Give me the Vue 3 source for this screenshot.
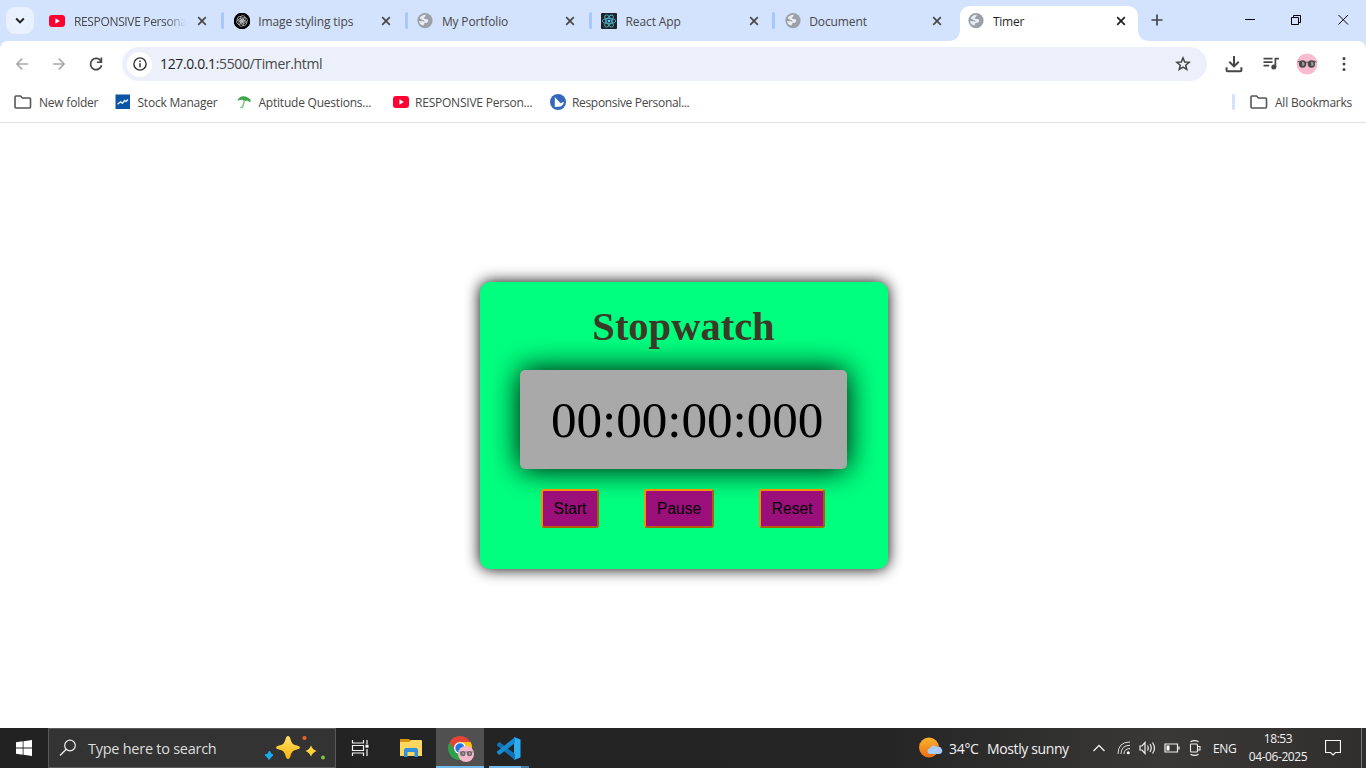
<script setup>
const tabs = [
  { title: 'RESPONSIVE Persona', icon: 'youtube', cls: 't-yt' },
  { title: 'Image styling tips', icon: 'gpt', cls: 't-img' },
  { title: 'My Portfolio', icon: 'globe', cls: 't-port' },
  { title: 'React App', icon: 'react', cls: 't-react' },
  { title: 'Document', icon: 'globe', cls: 't-doc' },
  { title: 'Timer', icon: 'globe', cls: 't-timer', active: true },
]
</script>

<template>
  <div class="screen">
    <div class="tabstrip">
      <div class="tabsearch">
        <svg width="10" height="10" viewBox="0 0 10 10"><path d="M1.2 2.500 5 6.300 8.800 2.500" fill="none" stroke="#1f1f1f" stroke-width="1.9" /></svg>
      </div>
      <div v-for="t in tabs" :key="t.title" class="tab" :class="[{ active: t.active }, t.cls]">
        <svg v-if="t.active" class="shape" width="202" height="35" viewBox="0 0 202 35">
          <path d="M0 35C8 35 12 31 12 23V11C12 4 16 0 23 0H179C186 0 190 4 190 11V23C190 31 194 35 202 35Z" fill="#fff" />
        </svg>
        <svg class="fav" width="16" height="16" viewBox="0 0 16 16">
          <g v-if="t.icon === 'youtube'">
            <rect y="2" width="16" height="12" rx="3" fill="#ff0033" /><path d="M6.400 5.300 10.800 8 6.400 10.700Z" fill="#fff" />
          </g>
          <g v-else-if="t.icon === 'gpt'">
            <circle cx="8" cy="8" r="8.300" fill="#000" />
            <g fill="none" stroke="#c4c4c4" stroke-width=".75">
              <rect v-for="a in [0, 60, 120, 180, 240, 300]" :key="a" x="6.200" y="2.700" width="5" height="6.200" rx="2.200" :transform="`rotate(${a} 8 8)`" />
            </g>
          </g>
          <g v-else-if="t.icon === 'react'">
            <rect width="16" height="16" rx="1" fill="#20232a" />
            <g fill="none" stroke="#4fb3c8" stroke-width=".9">
              <ellipse v-for="a in [0, 60, 120]" :key="a" cx="8" cy="8" rx="6.800" ry="2.600" :transform="`rotate(${a} 8 8)`" />
            </g>
            <circle cx="8" cy="8" r="1.300" fill="#61dafb" />
          </g>
          <g v-else>
            <circle cx="8" cy="7.600" r="7.600" fill="#9aa0a6" />
            <path d="M9.500 1.800C8 2.500 8.600 3.800 7.300 4.200S6.400 5.500 7.600 5.800 10.800 5.900 11.200 7.400 9.800 9.600 8.300 9.800 7.400 11.200 6.300 12.600C4 12 2.300 10.200 2 8.200H5.400C6.500 8.400 7.600 8.800 7.600 7.900S5.500 7.300 4.800 6.700 3.700 5.600 2.700 5.400C3.800 2.800 6.500 1.500 9.500 1.800Z" fill="#e9eef6" />
          </g>
        </svg>
        <span class="title">{{ t.title }}</span>
        <svg class="close" width="10" height="10" viewBox="0 0 10 10"><path d="M1.200 1.200 8.800 8.800M8.800 1.200 1.200 8.800" stroke="currentColor" stroke-width="1.700" /></svg>
        <i v-if="!t.active && t.title !== 'Document'" class="sep"></i>
      </div>
      <svg class="plus" width="12" height="12" viewBox="0 0 12 12"><path d="M6 .500V11.500M.500 6H11.500" stroke="#444746" stroke-width="1.700" /></svg>
      <div class="winctl">
        <svg width="11" height="12" viewBox="0 0 11 12"><path d="M1 5.500H11" stroke="#000" /></svg>
        <svg width="11" height="12" viewBox="0 0 11 12"><path d="M.500 3.500H7.500V10.500H.500ZM2.500 3.500V1.500H9.500V8.500H7.500" fill="none" stroke="#000" /></svg>
        <svg width="11" height="12" viewBox="0 0 11 12"><path d="M.500 1 10 10.500M10 1 .500 10.500" stroke="#000" /></svg>
      </div>
    </div>

    <div class="toolbar">
      <div class="nav">
        <svg width="16" height="16" viewBox="0 0 16 16"><path d="M14 8H2.800M8.200 2.600 2.800 8 8.200 13.400" fill="none" stroke="#a8aaa9" stroke-width="1.600" /></svg>
        <svg width="16" height="16" viewBox="0 0 16 16"><path d="M2 8H13.200M7.800 2.600 13.200 8 7.800 13.400" fill="none" stroke="#a8aaa9" stroke-width="1.600" /></svg>
        <svg width="16" height="16" viewBox="0 0 16 16"><path d="M13 5.200A5.600 5.600 0 1 0 13.600 9.300" fill="none" stroke="#444746" stroke-width="1.700" /><path d="M14.200 1.600V6.900H8.900V5.400H12.500V1.600Z" fill="#444746" /></svg>
      </div>
      <div class="omnibox">
        <div class="info"><svg width="14" height="14" viewBox="0 0 14 14"><circle cx="7" cy="7" r="6.100" fill="none" stroke="#333" stroke-width="1.400" /><path d="M7 6.200V10.300M7 3.500V5" stroke="#333" stroke-width="1.500" /></svg></div>
        <span class="url"><b>127.0.0.1</b>:5500/Timer.html</span>
        <svg class="star" width="16" height="16" viewBox="0 0 16 16"><path d="M8 1.900 9.700 6 14.100 6.350 10.750 9.200 11.800 13.500 8 11.200 4.200 13.500 5.250 9.200 1.900 6.350 6.300 6Z" fill="none" stroke="#444746" stroke-width="1.500" /></svg>
      </div>
      <div class="actions">
        <svg width="18" height="18" viewBox="0 0 18 18"><path d="M9 1V11M4.300 6.700 9 11.400 13.700 6.700M1.600 12.200V15.200Q1.600 16.200 2.600 16.200H15.400Q16.400 16.200 16.400 15.200V12.200" fill="none" stroke="#444746" stroke-width="2" /></svg>
        <svg class="music" width="18" height="18" viewBox="0 0 18 18"><path d="M1.500 3.600H10.500M1.500 7.100H10.500M1.500 10.600H7.200M13.400 12.500V3.600H17" fill="none" stroke="#444746" stroke-width="1.700" /><circle cx="11.800" cy="12" r="2.500" fill="#444746" /></svg>
        <svg class="avatar" width="22" height="22" viewBox="0 0 22 22"><circle cx="11" cy="11" r="10.500" fill="#f8bbd0" /><circle cx="6.600" cy="11" r="3.700" fill="#4a4a4a" /><circle cx="15.400" cy="11" r="3.700" fill="#4a4a4a" /><path d="M6 8.800A3 3 0 0 1 8.500 12L6.500 13.200ZM15 8.800A3 3 0 0 1 17.500 12L15.500 13.200Z" fill="#a2a5a4" /><path d="M1.500 9 4 8M18 8 20.500 9M9.500 9.500Q11 8.500 12.500 9.500" fill="none" stroke="#4a4044" stroke-width=".9" /></svg>
        <svg class="dots" width="4" height="16" viewBox="0 0 4 16"><circle v-for="y in [2.500, 8, 13.500]" :key="y" cx="2" :cy="y" r="1.500" fill="#444746" /></svg>
      </div>
    </div>

    <div class="bookmarks">
      <svg class="folder" width="18" height="14" viewBox="0 0 18 14"><path d="M1 2Q1 1 2 1H6.500L8.500 3H15.500Q16.500 3 16.500 4V12Q16.500 13 15.500 13H2Q1 13 1 12Z" fill="none" stroke="#555" stroke-width="1.600" /></svg>
      <span class="b1">New folder</span>
      <svg width="16" height="16" viewBox="0 0 16 16"><rect x=".500" y=".500" width="14.500" height="14.500" fill="#0b55a4" /><path d="M2.500 10.200 5.500 7.900 7.500 9.200 9.500 6.500 11 7.500 13 5.500" fill="none" stroke="#dceaff" stroke-width="1.400" /></svg>
      <span class="b2">Stock Manager</span>
      <svg width="16" height="16" viewBox="0 0 16 16"><path d="M1.500 7C2.500 2 9.500-.2 14.800 6L14 8.200 11.300 6.500 8.800 7.300 6.300 5.800 3.500 6Z" fill="#3ca64a" /><path d="M8.600 6 7 11.800Q6.500 14.400 4.400 13" fill="none" stroke="#84c98c" stroke-width="1.600" /></svg>
      <span class="b3">Aptitude Questions...</span>
      <svg width="16" height="16" viewBox="0 0 16 16"><rect y="2" width="16" height="12" rx="3" fill="#ff0033" /><path d="M6.400 5.300 10.800 8 6.400 10.700Z" fill="#fff" /></svg>
      <span class="b4">RESPONSIVE Person...</span>
      <svg width="16" height="16" viewBox="0 0 16 16"><circle cx="8" cy="8" r="8" fill="#3567bd" /><path d="M4.800 3 10.500 9.300 14 7.700Q13 13 8 12.800L4.800 13Z" fill="#fff" /></svg>
      <span class="b5">Responsive Personal...</span>
      <i class="bsep"></i>
      <svg class="folder" width="18" height="14" viewBox="0 0 18 14"><path d="M1 2Q1 1 2 1H6.500L8.500 3H15.500Q16.500 3 16.500 4V12Q16.500 13 15.500 13H2Q1 13 1 12Z" fill="none" stroke="#555" stroke-width="1.600" /></svg>
      <span class="b6">All Bookmarks</span>
    </div>

    <main class="page">
      <section class="watch">
        <h1>Stopwatch</h1>
        <div class="display">00:00:00:000</div>
        <div class="buttons"><button>Start</button><button>Pause</button><button>Reset</button></div>
      </section>
    </main>

    <footer class="taskbar">
      <div class="start"><svg width="16" height="16" viewBox="0 0 16 16"><path d="M0 2.300 6.700 1.300V7.600H0ZM7.500 1.200 16 0V7.600H7.500ZM0 8.400H6.700V14.700L0 13.700ZM7.500 8.400H16V16L7.500 14.800Z" fill="#fff" /></svg></div>
      <div class="search">
        <svg width="18" height="18" viewBox="0 0 18 18"><circle cx="11" cy="6.500" r="5.300" fill="none" stroke="#eee" stroke-width="1.200" /><path d="M7.200 10.300 1 16.500" stroke="#eee" stroke-width="1.300" /></svg>
        <span>Type here to search</span>
        <svg class="sparkle" width="64" height="28" viewBox="0 0 64 28">
          <defs><linearGradient id="gold" x1="0" y1="0" x2="0" y2="1"><stop stop-color="#ffe066" /><stop offset="1" stop-color="#f9b50c" /></linearGradient></defs>
          <path d="M24 1Q26 1 27 6Q28 9 31 10Q36 11 36 12.500T31 15Q28 16 27 19Q26 24 24 24T21 19Q20 16 17 15Q12 14 12 12.500T17 10Q20 9 21 6Q22 1 24 1Z" fill="url(#gold)" />
          <path d="M47 10.500Q48.500 14.500 52.500 16 48.500 17.500 47 21.500 45.500 17.500 41.500 16 45.500 14.500 47 10.500Z" fill="#ffd23c" />
          <path d="M5.500 16 7 19 9 20 7 22 5 24.500 3.500 22 1 20 4 19Z" fill="#18aef0" stroke="#18aef0" stroke-linejoin="round" />
          <circle cx="40.500" cy="3" r="2.100" fill="#ef6526" /><circle cx="59" cy="22.500" r="2" fill="#82c341" />
        </svg>
      </div>
      <div class="tile"><svg width="18" height="18" viewBox="0 0 18 18"><path d="M1.500 1V4H12.500V1M1.500 17V14H12.500V17M1.500 6.500H12.500V11.500H1.500ZM16 1V5M16 10V17" fill="none" stroke="#f2f2f2" stroke-width="1.200" /><rect x="14.500" y="5.700" width="3" height="3" fill="#fff" /></svg></div>
      <div class="tile explorer"><svg width="22" height="20" viewBox="0 0 22 20"><path d="M0 1H9L11 3V8H0Z" fill="#d9920a" /><path d="M0 4H9L11 2H21Q22 2 22 3V18H0Z" fill="#ffd660" /><path d="M4 19V12Q4 10 6 10H16Q18 10 18 12V19H14.500V14H7.500V19Z" fill="#3290dc" /></svg></div>
      <div class="tile chrome">
        <svg width="28" height="28" viewBox="0 0 28 28">
          <path d="M13 13 23.400 7A12 12 0 0 1 13 25Z" fill="#fbc116" /><path d="M13 13V25A12 12 0 0 1 2.600 7Z" fill="#2ba24c" /><path d="M2.600 7 8 16 13 13V7H23.400A12 12 0 0 0 2.600 7Z" fill="#e84435" /><path d="M13 7H23.400A12 12 0 0 1 25 13H17Z" fill="#fbc116" />
          <circle cx="13" cy="13" r="6" fill="#fff" /><circle cx="13" cy="13" r="4.700" fill="#2376e5" /><circle cx="19" cy="19" r="8" fill="#f6b8cc" /><path d="M12.500 17H26" stroke="#77636b" stroke-width=".8" /><circle cx="15.800" cy="18.600" r="2.600" fill="#666" /><circle cx="22.500" cy="18.600" r="2.600" fill="#666" /><path d="M15.500 16.800 17.500 18.600 15.500 20.400ZM22 16.800 24 18.600 22 20.400Z" fill="#aaa" />
        </svg>
      </div>
      <div class="tile code">
        <svg width="26" height="26" viewBox="0 0 26 26"><path d="M18 1 24.500 3.500V21.500L18 24Z" fill="#2baef0" /><path d="M1 8 3.500 6 19 18V24L1 9.500Z" fill="#1272b8" /><path d="M1 17 3.500 19 19 7V1L1 15.500Z" fill="#178bd1" /></svg>
      </div>
      <div class="tray">
        <svg class="weather" width="24" height="22" viewBox="0 0 24 22"><defs><linearGradient id="sun" x1="0" y1="0" x2="0" y2="1"><stop stop-color="#f9b42b" /><stop offset="1" stop-color="#ef6c16" /></linearGradient></defs><circle cx="10" cy="10.500" r="10" fill="url(#sun)" /><path d="M10.500 17A3 3 0 0 1 11 11.200 4 4 0 0 1 18 10.300 3.500 3.500 0 0 1 21 17Z" fill="#a9cbfb" /></svg>
        <span class="temp">34°C</span><span class="sunny">Mostly sunny</span>
        <svg class="up" width="12" height="8" viewBox="0 0 12 8"><path d="M.500 7 6 1.500 11.500 7" fill="none" stroke="#eee" stroke-width="1.300" /></svg>
        <svg class="wifi" width="14" height="14" viewBox="0 0 14 14"><path d="M1 13Q1 1 13 1M4 13Q4 4.300 13 4.300M7 13Q7 7.600 13 7.600" fill="none" stroke="#ddd" stroke-width="1" /><circle cx="11.300" cy="11.700" r="1.500" fill="#fff" /></svg>
        <svg class="vol" width="18" height="14" viewBox="0 0 18 14"><path d="M1 5H3L6 1.500V12.500L3 9H1ZM8.500 4.500Q10 7 8.500 9.500M11 3Q13.500 7 11 11M13.500 1.500Q17.500 7 13.500 12.500" fill="none" stroke="#eee" stroke-width="1.200" /></svg>
        <svg class="bat" width="16" height="10" viewBox="0 0 16 10"><path d="M1 1H13.500V9H1ZM15 3.500V6.500" fill="none" stroke="#eee" stroke-width="1.200" /><rect x="2.500" y="2.500" width="3" height="5" fill="#fff" /></svg>
        <svg class="cam" width="13" height="16" viewBox="0 0 13 16"><path d="M1.500 4H7.500Q8.500 4 8.500 5V11Q8.500 12 7.500 12H2.500Q1.500 12 1.500 11V4M8.500 6.500H11V10H8.500M1.500 1.800Q5.500-.500 9.500 1.800M1.500 14.200Q5.500 16.500 9.500 14.200" fill="none" stroke="#eee" stroke-width="1.100" /></svg>
        <span class="eng">ENG</span>
        <div class="clock"><span class="time">18:53</span><span class="date">04-06-2025</span></div>
        <svg class="note" width="16" height="16" viewBox="0 0 16 16"><path d="M.500.500H15.500V12.500H10.500L8 15 5.500 12.500H.500Z" fill="none" stroke="#f4f4f4" stroke-width="1.200" /></svg>
      </div>
    </footer>
  </div>
</template>

<style>
body { margin: 0; overflow: hidden; }
</style>

<style scoped>
* { box-sizing: border-box; }
svg { display: block; flex: none; }
.screen { width: 1366px; height: 768px; display: flex; flex-direction: column; background: #fff; font-family: "Open Sans", "Noto Sans", sans-serif; overflow: hidden; }
.tabstrip { height: 41px; flex: none; display: flex; background: #d3e3fd; padding-left: 6px; }
.tabsearch { width: 28px; height: 27px; margin: 7px 4px 0 0; border-radius: 9px; background: #e9f1fe; display: flex; align-items: center; justify-content: center; }
.tab { position: relative; width: 183.700px; flex: none; height: 41px; display: flex; align-items: center; padding-left: 12px; font-size: 12px; color: #474747; }
.t-yt { padding-left: 11px; }
.t-yt .title { margin-left: 9px; }
.tab.active { color: #1f1f1f; }
.shape { position: absolute; left: -8.500px; top: 6px; }
.fav { position: relative; }
.title { position: relative; margin-left: 8.500px; width: 112px; white-space: nowrap; overflow: hidden; line-height: 20px; margin-top: 3px; }
.t-yt .title { letter-spacing: -.35px; -webkit-mask-image: linear-gradient(90deg, #000 82%, transparent); mask-image: linear-gradient(90deg, #000 82%, transparent); }
.t-img .title { letter-spacing: -.1px; }
.t-port .title { letter-spacing: -.15px; }
.t-react .title, .t-doc .title { letter-spacing: -.12px; }
.t-timer .title { letter-spacing: -.25px; }
.close { position: relative; margin-left: 11px; }
.sep { position: absolute; right: -2.500px; top: 12px; width: 3px; height: 17px; border-radius: 2px; background: #a8c7fa; }
.plus { margin: 14px 0 0 11px; }
.winctl { margin: 14px 17px 0 auto; display: flex; gap: 36px; }
.toolbar { height: 46px; flex: none; display: flex; align-items: center; padding-left: 14px; background: #fff; border-radius: 8px 8px 0 0; box-shadow: 0 -8px 0 8px #d3e3fd; clip-path: inset(0); }
.nav { display: flex; gap: 21px; width: 108px; }
.omnibox { width: 1085px; height: 34px; border-radius: 17px; background: #ecf0fa; display: flex; align-items: center; padding: 0 16px 0 5px; }
.info { width: 25px; height: 25px; border-radius: 50%; background: #fff; display: flex; align-items: center; justify-content: center; margin-right: 8px; }
.url { font-size: 14px; letter-spacing: -.37px; color: #474747; margin-top: -1px; }
.url b { font-weight: 400; color: #1f1f1f; }
.star { margin-left: auto; }
.actions { display: flex; align-items: center; margin-left: 18px; }
.music { margin-left: 19px; }
.avatar { margin-left: 16px; }
.dots { margin-left: 24px; }
.bookmarks { height: 36px; flex: none; display: flex; align-items: center; padding: 0 14px 5px; border-bottom: 1px solid #dfe1e5; font-size: 12px; color: #474747; white-space: nowrap; }
.bookmarks span { margin-left: 6.500px; line-height: 18px; letter-spacing: -.22px; margin-top: 1px; flex: none; }
.bookmarks .b1 { margin-left: 7px; width: 76px; }
.b2 { width: 98.500px; }
.b3 { width: 134px; }
.b4 { width: 134.500px; }
.bookmarks .b5 { letter-spacing: -.33px; }
.bsep { width: 3px; height: 16px; background: #d3e3fd; margin: 0 15px 0 auto; border-radius: 1px; }
.bookmarks .b6 { margin-left: 7px; width: 77px; }
.page { height: 605px; flex: none; display: flex; justify-content: center; padding-top: 158.500px; padding-left: 2px; }
.watch { width: 408px; height: 287.500px; border-radius: 10px; background: #00ff7f; box-shadow: 0 0 15px #000; padding: 22.500px 40px 0; font-family: "Liberation Serif", serif; }
h1 { margin: 0 0 0 -1px; font-size: 40.500px; line-height: 46px; color: #3b3a26; text-align: center; }
.display { width: 327px; height: 99px; margin-top: 20px; border-radius: 5px; background: #a9a9a9; box-shadow: 0 0 30px #000; font-size: 51.200px; letter-spacing: -.05px; line-height: 99px; padding-left: 31px; color: #000; }
.buttons { display: flex; justify-content: space-between; width: 284px; margin: 20px 0 0 21px; }
button { height: 39px; padding: 0 10.500px; border: 2px outset #ff8c00; border-radius: 3px; background: #9b0f7b; color: #000; font: 15.600px "Liberation Sans", sans-serif; }
.taskbar { height: 40px; flex: none; display: flex; background: linear-gradient(90deg, #222 0%, #252525 65%, #393837 85%, #302f2e 100%); color: #f2f2f2; }
.start { width: 48px; display: flex; align-items: center; justify-content: center; }
.search { width: 288px; border: 1px solid #5b5b5b; background: #333; display: flex; align-items: center; padding-left: 10px; font-size: 14.500px; letter-spacing: -.26px; color: #ddd; white-space: nowrap; }
.search span { width: 176px; margin-left: 11px; }
.sparkle { margin-top: 2px; }
.tile { width: 48px; display: flex; align-items: center; justify-content: center; }
.explorer { width: 52px; padding-left: 2px; }
.chrome { background: #505050; border-bottom: 2px solid #76b9ed; padding-left: 2px; padding-top: 4px; }
.code { width: 40px; margin-left: 5px; border-bottom: 2px solid; border-image: linear-gradient(90deg, #76b9ed 78%, #4a7ca3 78%) 1; padding-top: 3px; }
.tray { margin-left: auto; display: flex; align-items: center; width: 447px; white-space: nowrap; position: relative; }
.tray::after { content: ""; position: absolute; right: 4px; top: 0; width: 1px; height: 40px; background: #777; }
.temp { width: 38px; margin-left: 6px; font-size: 14px; letter-spacing: -.3px; }
.sunny { width: 106px; font-size: 14px; letter-spacing: -.38px; }
.wifi { margin-left: 12px; }
.vol { margin-left: 8px; }
.bat { margin-left: 7px; }
.cam { margin-left: 9px; }
.eng { width: 35px; margin-left: 11px; font-size: 12px; letter-spacing: -.3px; }
.clock { width: 60px; display: flex; flex-direction: column; align-items: center; font-size: 12px; line-height: 18px; letter-spacing: -.43px; }
.note { margin-left: 17px; }
</style>
